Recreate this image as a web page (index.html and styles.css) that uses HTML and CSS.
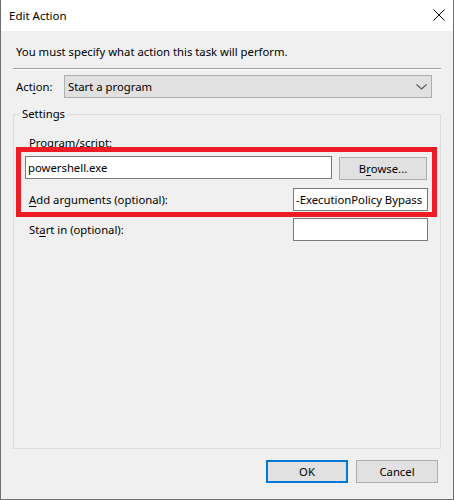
FILE: index.html
```html
<!DOCTYPE html>
<html lang="en">
<head>
  <meta charset="UTF-8" />
  <title>Edit Action</title>
  <link rel="stylesheet" href="styles.css">
</head>
<body>

  <div class="window">

    <!-- Title bar -->
    <div class="titlebar">
      <span class="title">Edit Action</span>
      <span class="close">
        <svg width="12" height="12" viewBox="0 0 12 12">
          <path d="M0.5 0.5 L11.5 11.5 M11.5 0.5 L0.5 11.5" stroke="#000" stroke-width="1" fill="none"/>
        </svg>
      </span>
    </div>

    <div class="content">
      <p class="intro">You must specify what action this task will perform.</p>
      <div class="divider"></div>

      <div class="action-row">
        <span class="action-label">Act<u>i</u>on:</span>
        <div class="combo">
          <span>Start a program</span>
          <svg width="11" height="6" viewBox="0 0 11 6">
            <path d="M0.5 0.5 L5.5 5 L10.5 0.5" stroke="#555" stroke-width="1.1" fill="none"/>
          </svg>
        </div>
      </div>

      <!-- Settings group -->
      <fieldset class="group">
        <legend>Settings</legend>
        <div class="field-label">Program/script:</div>
        <div class="program-row">
          <div class="textbox wide">powershell.exe</div>
          <div class="button browse">B<u>r</u>owse...</div>
        </div>
        <div class="arg-row first">
          <span class="arg-label"><u>A</u>dd arguments (optional):</span>
          <div class="textbox small">-ExecutionPolicy Bypass</div>
        </div>
        <div class="arg-row">
          <span class="arg-label">St<u>a</u>rt in (optional):</span>
          <div class="textbox small"></div>
        </div>
      </fieldset>

      <div class="footer">
        <div class="button ok">OK</div>
        <div class="button">Cancel</div>
      </div>
    </div>

    <!-- red annotation box -->
    <div class="highlight"></div>
  </div>

</body>
</html>
```

FILE: styles.css
```css
/* --------------------------------
   Reset / Basic
----------------------------------- */
* {
  margin: 0;
  padding: 0;
  box-sizing: border-box;
}
html, body {
  font-family: "Noto Sans", "Open Sans", sans-serif;
  font-size: 11.3px;
  line-height: 16px;
  color: #000;
  background: #fff;
}
u {
  text-decoration-thickness: 1px;
  text-underline-offset: 2px;
}

/* --------------------------------
   Window frame
----------------------------------- */
.window {
  position: relative;
  width: 454px;
  height: 500px;
  border: 1px solid #6f6f6f;
  border-top: none;
  background: #f0f0f0;
  display: flex;
  flex-direction: column;
}
.titlebar {
  height: 31px;
  background: #fff;
  display: flex;
  align-items: center;
  justify-content: space-between;
  padding: 0 8px 0 8px;
}
.title {
  font-size: 11.5px;
}
.close {
  display: flex;
  margin-top: -1px;
}

/* --------------------------------
   Content
----------------------------------- */
.content {
  flex: 1;
  display: flex;
  flex-direction: column;
  padding: 0 12px;
}
.intro {
  margin-top: 13px;
  padding-left: 3px;
}
.divider {
  margin-top: 8px;
  height: 2px;
  border-top: 1px solid #a0a0a0;
  border-bottom: 1px solid #fff;
}
.action-row {
  margin-top: 5px;
  display: flex;
  align-items: center;
}
.action-label {
  width: 51px;
  padding-left: 3px;
}
.combo {
  width: 368px;
  height: 23px;
  background: #e1e1e1;
  border: 1px solid #adadad;
  display: flex;
  align-items: center;
  justify-content: space-between;
  padding: 0 4px 0 3px;
}

/* --------------------------------
   Settings group
----------------------------------- */
.group {
  flex: 1;
  margin-top: 8px;
  border: 1px solid #dcdcdc;
  padding: 13px 11px 0 11px;
}
.group legend {
  margin-left: -5px;
  padding: 0 2px;
}
.field-label {
  padding-left: 4px;
}
.program-row {
  margin-top: 5px;
  display: flex;
  gap: 7px;
}
.textbox {
  height: 23px;
  background: #fff;
  border: 1px solid #7a7a7a;
  padding: 0 2px;
  display: flex;
  align-items: center;
  white-space: nowrap;
  overflow: hidden;
}
.textbox.wide {
  width: 307px;
}
.textbox.small {
  width: 135px;
}
.arg-row {
  margin-top: 7px;
  display: flex;
  align-items: center;
  justify-content: space-between;
  padding-right: 1px;
}
.arg-row.first {
  margin-top: 8px;
}
.arg-label {
  padding-left: 4px;
}

/* --------------------------------
   Buttons
----------------------------------- */
.button {
  height: 23px;
  background: #e1e1e1;
  border: 1px solid #adadad;
  display: flex;
  align-items: center;
  justify-content: center;
}
.browse {
  width: 88px;
  margin-top: 1px;
}
.footer {
  display: flex;
  justify-content: flex-end;
  gap: 8px;
  padding: 11px 3px 16px 0;
}
.footer .button {
  width: 82px;
}
.footer .ok {
  border: 2px solid #0078d7;
}

/* --------------------------------
   Annotation
----------------------------------- */
.highlight {
  position: absolute;
  left: 15px;
  top: 147px;
  width: 421px;
  height: 70px;
  border: 5px solid #ed1c24;
  pointer-events: none;
}
```
